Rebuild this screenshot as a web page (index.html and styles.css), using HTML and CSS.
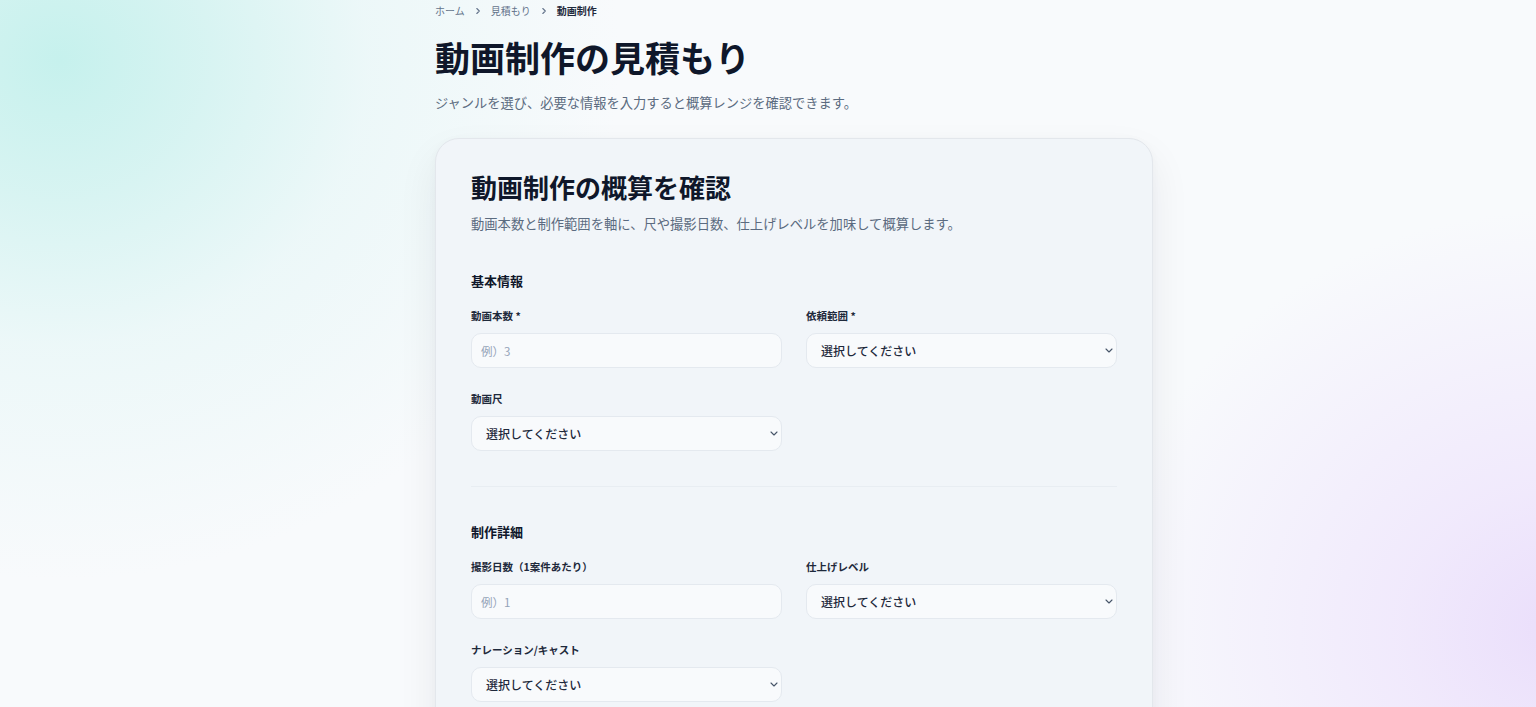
FILE: index.html
```html
<!DOCTYPE html>
<html lang="ja">
<head>
<meta charset="utf-8">
<title>動画制作の見積もり</title>
<link rel="stylesheet" href="styles.css">
</head>
<body>
<div class="page">
  <main class="main">
    <nav class="crumbs">
      <a class="crumb" href="#">ホーム</a>
      <svg class="sep" viewBox="0 0 8 8" width="8" height="8"><path d="M2.8 1.5 5.3 4 2.8 6.5" fill="none" stroke="#64748b" stroke-width="1.1" stroke-linecap="round" stroke-linejoin="round"/></svg>
      <a class="crumb" href="#">見積もり</a>
      <svg class="sep" viewBox="0 0 8 8" width="8" height="8"><path d="M2.8 1.5 5.3 4 2.8 6.5" fill="none" stroke="#64748b" stroke-width="1.1" stroke-linecap="round" stroke-linejoin="round"/></svg>
      <span class="crumb current">動画制作</span>
    </nav>
    <h1 class="title">動画制作の見積もり</h1>
    <p class="lead">ジャンルを選び、必要な情報を入力すると概算レンジを確認できます。</p>

    <section class="card">
      <h2 class="card-title">動画制作の概算を確認</h2>
      <p class="card-lead">動画本数と制作範囲を軸に、尺や撮影日数、仕上げレベルを加味して概算します。</p>

      <div class="section">
        <h3 class="section-title">基本情報</h3>
        <div class="grid">
          <div class="field">
            <label class="label">動画本数 *</label>
            <div class="input"><span class="placeholder">例）3</span></div>
          </div>
          <div class="field">
            <label class="label">依頼範囲 *</label>
            <div class="select"><span>選択してください</span><svg viewBox="0 0 8 5" width="8" height="5"><path d="M1 1 4 4 7 1" fill="none" stroke="#475569" stroke-width="1.1" stroke-linecap="round" stroke-linejoin="round"/></svg></div>
          </div>
          <div class="field">
            <label class="label">動画尺</label>
            <div class="select"><span>選択してください</span><svg viewBox="0 0 8 5" width="8" height="5"><path d="M1 1 4 4 7 1" fill="none" stroke="#475569" stroke-width="1.1" stroke-linecap="round" stroke-linejoin="round"/></svg></div>
          </div>
        </div>
      </div>

      <div class="section">
        <h3 class="section-title">制作詳細</h3>
        <div class="grid">
          <div class="field">
            <label class="label">撮影日数（1案件あたり）</label>
            <div class="input"><span class="placeholder">例）1</span></div>
          </div>
          <div class="field">
            <label class="label">仕上げレベル</label>
            <div class="select"><span>選択してください</span><svg viewBox="0 0 8 5" width="8" height="5"><path d="M1 1 4 4 7 1" fill="none" stroke="#475569" stroke-width="1.1" stroke-linecap="round" stroke-linejoin="round"/></svg></div>
          </div>
          <div class="field">
            <label class="label">ナレーション/キャスト</label>
            <div class="select"><span>選択してください</span><svg viewBox="0 0 8 5" width="8" height="5"><path d="M1 1 4 4 7 1" fill="none" stroke="#475569" stroke-width="1.1" stroke-linecap="round" stroke-linejoin="round"/></svg></div>
          </div>
        </div>
      </div>
    </section>
  </main>
</div>
</body>
</html>
```
FILE: styles.css
```css
* { box-sizing: border-box; }
html, body { margin: 0; padding: 0; }
body {
  font-family: "Noto Sans CJK JP", "Noto Sans", sans-serif;
  color: #0f172a;
  background-color: #f8fafc;
  background-image:
    radial-gradient(ellipse 560px 520px at 60px 60px, rgba(198, 241, 237, 1) 0%, rgba(206, 242, 239, 0.8) 25%, rgba(222, 245, 244, 0.45) 55%, rgba(248, 250, 252, 0) 100%),
    radial-gradient(ellipse 460px 420px at 1560px 630px, rgba(234, 222, 251, 1) 0%, rgba(238, 228, 252, 0.75) 35%, rgba(248, 250, 252, 0) 100%);
  background-repeat: no-repeat;
  min-height: 707px;
  overflow: hidden;
}
.page { width: 1536px; }
.main { width: 718px; margin-left: 435px; padding-top: 3px; }

.crumbs { display: flex; align-items: center; gap: 8px; height: 16px; font-size: 10px; line-height: 16px; }
.crumb { color: #64748b; text-decoration: none; }
.crumb.current { color: #1e293b; font-weight: 600; }
.sep { margin: 0 1px; }

.title { margin: 16px 0 0; font-size: 35px; line-height: 44px; font-weight: 700; color: #0f172a; letter-spacing: 0; }
.lead { margin: 14px 0 0; font-size: 13.25px; line-height: 20px; color: #5b6b80; }

.card {
  margin-top: 25px;
  background: #f1f5f9;
  border: 1px solid #e3e7ec;
  border-radius: 24px;
  padding: 31px 35px 60px;
  box-shadow: 0 18px 40px rgba(15, 23, 42, 0.07), 0 2px 8px rgba(15, 23, 42, 0.03);
}
.card-title { margin: 0; font-size: 26px; line-height: 34px; font-weight: 700; color: #0f172a; }
.card-lead { margin: 10px 0 0; font-size: 13.3px; line-height: 20px; color: #5b6b80; }

.section { padding-top: 38px; padding-bottom: 35px; border-bottom: 1px solid #e8edf2; }
.section + .section { padding-top: 36px; border-bottom: none; }
.section-title { margin: 0 0 19px; font-size: 13px; line-height: 18px; font-weight: 700; color: #0f172a; }

.grid { display: grid; grid-template-columns: 1fr 1fr; column-gap: 24px; row-gap: 24px; }
.field { display: flex; flex-direction: column; gap: 10px; }
.label { font-size: 10.5px; line-height: 14px; font-weight: 700; color: #1e293b; }

.input, .select {
  height: 35px;
  border: 1px solid #e4e9ef;
  border-radius: 10px;
  background: #f8fafc;
  display: flex;
  align-items: center;
}
.input { padding: 0 9px; }
.placeholder { color: #94a3b8; font-size: 11.5px; }
.select { padding: 0 3px 0 14px; justify-content: space-between; color: #1e293b; font-weight: 500; font-size: 12px; }
.select svg { flex: none; }
```
